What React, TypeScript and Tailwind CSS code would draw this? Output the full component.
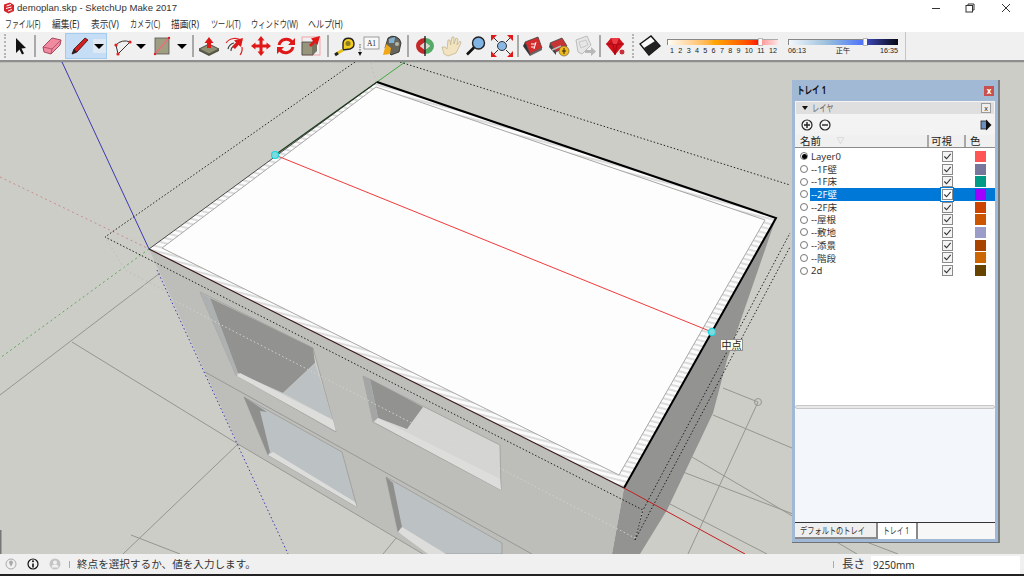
import type { ReactNode } from 'react';

const layers = [
  { name: 'Layer0', color: 'bg-[#ff5555]', active: true },
  { name: '--1F壁', color: 'bg-[#77779b]' },
  { name: '--1F床', color: 'bg-[#009a85]' },
  { name: '--2F壁', color: 'bg-[#a000ff]', selected: true },
  { name: '--2F床', color: 'bg-[#cc4400]' },
  { name: '--屋根', color: 'bg-[#cc5500]' },
  { name: '--敷地', color: 'bg-[#9c9cc8]' },
  { name: '--添景', color: 'bg-[#a84400]' },
  { name: '--階段', color: 'bg-[#cc6600]' },
  { name: '2d', color: 'bg-[#664400]' },
];

const menus = [
  { label: 'ファイル(F)', w: 'w-[47px]', s: 'scale-x-[0.69]' },
  { label: '編集(E)', w: 'w-[39px]', s: 'scale-x-[0.87]' },
  { label: '表示(V)', w: 'w-[39px]', s: 'scale-x-[0.87]' },
  { label: 'カメラ(C)', w: 'w-[41px]', s: 'scale-x-[0.71]' },
  { label: '描画(R)', w: 'w-[40px]', s: 'scale-x-[0.87]' },
  { label: 'ツール(T)', w: 'w-[40px]', s: 'scale-x-[0.71]' },
  { label: 'ウィンドウ(W)', w: 'w-[57px]', s: 'scale-x-[0.72]' },
  { label: 'ヘルプ(H)', w: 'w-[40px]', s: 'scale-x-[0.8]' },
];
const hours = ['1', '2', '3', '4', '5', '6', '7', '8', '9', '10', '11', '12'];

function Tool({ w = 'w-[26px]', children }: { w?: string; children: ReactNode }) {
  return (
    <div className={`flex h-full shrink-0 items-center justify-center ${w}`}>
      <svg viewBox="0 0 24 24" className="h-6 w-6 shrink-0 overflow-visible">
        {children}
      </svg>
    </div>
  );
}

function Sep({ w }: { w: string }) {
  return (
    <div className={`flex h-full shrink-0 items-center justify-center ${w}`}>
      <div className="h-[22px] w-0.5 bg-[#a9a9a9]" />
    </div>
  );
}

function Grip({ w }: { w: string }) {
  return (
    <div className={`flex h-full shrink-0 items-center justify-center ${w}`}>
      <div className="h-[24px] border-l-2 border-dotted border-[#b5b5b5]" />
    </div>
  );
}

function Drop({ w, boxed }: { w: string; boxed?: boolean }) {
  return (
    <div className={`flex h-full shrink-0 items-center justify-center ${w}`}>
      <div className={`flex items-center justify-center ${boxed ? 'h-[14px] w-[13px] bg-[#dfe9f3]' : ''}`}>
        <div className="h-0 w-0 border-x-[5px] border-t-[5px] border-x-transparent border-t-black" />
      </div>
    </div>
  );
}

function Check({ onBlue }: { onBlue?: boolean }) {
  return (
    <div className={`flex h-[11px] w-[11px] items-center justify-center border border-[#8a8a8a] ${onBlue ? 'bg-white' : 'bg-[#f4f4f4]'}`}>
      <svg viewBox="0 0 10 10" className="h-[9px] w-[9px]">
        <path d="M1.5 5 L4 7.5 L8.5 2" fill="none" stroke="#333" strokeWidth="1.2" />
      </svg>
    </div>
  );
}

function Scene() {
  return (
    <svg viewBox="0 62 1024 492" className="block h-[492px] w-[1024px]">
      <defs>
        <pattern id="hatch" width="6" height="5" patternUnits="userSpaceOnUse" patternTransform="rotate(14)">
          <rect width="6" height="5" fill="#fbfbfb" />
          <rect width="6" height="2" fill="#dcdcdc" />
        </pattern>
      </defs>
      <rect x="0" y="62" width="1024" height="492" fill="#cdcdc8" />
      <rect x="0" y="62" width="1024" height="1" fill="#bdbdb9" />

      {/* ground lines */}
      <g stroke="#96968f" strokeWidth="1" fill="none">
        <path d="M160 273 L0 395" />
        <path d="M72 342 L238 444" />
        <path d="M238 444 L123 554" />
        <path d="M131 535 L180 554" />
        <path d="M397 537 L383 554" />
        <path d="M723 388 L758 402 L688 554" />
        <path d="M713 415 L1000 535" />
        <path d="M692 457 L857 554" />
        <path d="M683 472 L898 554" />
        <path d="M668 503 L767 554" />
      </g>
      <circle cx="758" cy="402" r="3.5" fill="none" stroke="#96968f" />

      {/* axes */}
      <path d="M0 177 L149 249" stroke="#c98d8d" strokeWidth="1" strokeDasharray="2 3" />
      <path d="M149 249 L0 358" stroke="#5aaa5a" strokeWidth="1" strokeDasharray="2 3" />
      <path d="M62 62 L149 249" stroke="#3a3ab0" strokeWidth="1" />
      <path d="M377 82 L405 62" stroke="#3fa83f" strokeWidth="1" />
      <path d="M107 240 L125 270 L166 291" stroke="#bdbdb8" strokeWidth="1" strokeDasharray="1.5 3" fill="none" />
      <path d="M371 63 L376 82" stroke="#bdbdb8" strokeWidth="1" strokeDasharray="1.5 3" />

      {/* right wall */}
      <polygon points="776,218 727,360 713,413 667,510 640,554 612,554 624,488" fill="#939392" />
      {/* front wall */}
      <polygon points="149,249 624,488 612,554 423,554 238,444" fill="#bdbdba" />
      <path d="M205 372 L532 554" stroke="#989895" strokeWidth="1" />
      <path d="M238 444 L423 554" stroke="#989895" strokeWidth="1" />

      {/* window upper left */}
      <polygon points="200,292 313,348 336,432 236,375" fill="#cfcfcc" stroke="#9c9c98" strokeWidth="0.8" />
      <polygon points="200,292 210,298 238,373 236,375" fill="#aeb1b2" />
      <polygon points="210,298 313,348 315,363 283,393 238,373" fill="#929290" />
      <polygon points="315,363 333,420 283,393" fill="#bcc1c3" />
      <polygon points="237,376 240,373 333,420 336,431" fill="#dddddb" />

      {/* window upper right */}
      <polygon points="363,376 500,445 501,490 373,422" fill="#d5d5d3" stroke="#9c9c98" strokeWidth="0.8" />
      <polygon points="363,376 370,379 378,418 373,422" fill="#a4a5a5" />
      <polygon points="370,379 423,407 407,429 378,418" fill="#929290" />
      <polygon points="375,422 378,418 500,479 501,490" fill="#dddddb" />

      {/* window lower left */}
      <polygon points="244,397 342,452 357,507 268,455" fill="#bcc1c3" stroke="#9c9c98" strokeWidth="0.8" />
      <polygon points="244,397 267,412 260,411 270,452 268,455" fill="#8f8f8d" />
      <polygon points="268,455 273,452 355,502 357,507" fill="#dddddb" />

      {/* window lower right */}
      <polygon points="386,477 502,543 502,554 443,554 398,532" fill="#bcc1c3" stroke="#9c9c98" strokeWidth="0.8" />
      <polygon points="386,477 393,483 402,527 398,532" fill="#8f8f8d" />
      <polygon points="398,532 402,527 446,554 428,554" fill="#dddddb" />

      {/* white dashed line through the wall */}
      <path d="M140 283 L635 538" stroke="#d2d2cf" strokeWidth="1" strokeDasharray="1.5 2.5" />
      <path d="M635 538 L643 510" stroke="#d2d2cf" strokeWidth="1" strokeDasharray="1.5 2.5" />
      <path d="M157 270 L288 554" stroke="#3a3ab0" strokeWidth="1" strokeDasharray="1.5 2.5" />

      {/* roof */}
      <path d="M149 249 L377 82 L776 218 L624 488 Z M162 248 L619 475 L765 220 L376 87 Z" fill="url(#hatch)" fillRule="evenodd" />
      <polygon points="162,248 376,87 765,220 619,475" fill="#fdfdfd" stroke="#a9a9a7" strokeWidth="1" />
      <path d="M149 249 L377 82" stroke="#4a4a4a" strokeWidth="1" />
      <path d="M275 155 L377 82" stroke="#1e3a1e" strokeWidth="1.2" />
      <path d="M377 82 L776 218 L624 488" fill="none" stroke="#000" strokeWidth="2" />
      <path d="M149 249 L624 488" stroke="#3a1a1a" strokeWidth="1.2" />
      <path d="M624 488 L745 554" stroke="#c42020" strokeWidth="1" />
      <path d="M275 155 L712 332" stroke="#f23a3a" strokeWidth="1" />

      {/* selection box */}
      <g stroke="#222" strokeWidth="1" strokeDasharray="1.5 2" fill="none">
        <path d="M355 62 L105 237 L643 510 L790 233" />
        <path d="M400 62 L790 185" />
        <path d="M635 540 L790 247" />
        <path d="M635 540 L643 510" />
      </g>

      {/* inference points */}
      <circle cx="275" cy="155" r="3.5" fill="#7fd9dd" stroke="#18d8e0" strokeWidth="1.2" />
      <circle cx="712" cy="332" r="3.5" fill="#7fd9dd" stroke="#18d8e0" strokeWidth="1.2" />
      <rect x="0" y="530" width="1.5" height="24" fill="#777" />
    </svg>
  );
}

function TrayPanel() {
  return (
    <div className="absolute left-[792px] top-[18px] flex h-[463px] w-[208px] flex-col border-r-2 border-b border-[#6f7378] border-r-[#7a7d80] bg-[#a1b9d4] px-[3px] pb-[3px]">
      <div className="flex h-[21px] shrink-0 items-center justify-between pl-[2px] pr-[1px]">
        <span className="inline-block origin-left scale-x-[0.72] whitespace-nowrap text-[10.5px] font-bold text-[#111]">トレイ 1</span>
        <div className="flex h-[10px] w-[10px] items-center justify-center bg-[#c75050] text-[8px] font-bold leading-none text-white">x</div>
      </div>
      <div className="flex min-h-0 flex-1 flex-col bg-white">
        <div className="flex h-[14px] shrink-0 items-center justify-between border border-[#f4f4f4] bg-[#dfdfdf] pl-[6px] pr-[3px]">
          <div className="flex items-center gap-[4px]">
            <div className="h-0 w-0 border-x-[3px] border-t-[4px] border-x-transparent border-t-[#111]" />
            <span className="inline-block origin-left scale-x-[0.72] whitespace-nowrap text-[10px] leading-none text-[#666]">レイヤ</span>
          </div>
          <div className="flex h-[10px] w-[10px] items-center justify-center border border-[#9a9a9a] bg-[#eeeeee] text-[7px] leading-none text-[#333]">x</div>
        </div>
        <div className="flex h-[20px] shrink-0 items-center justify-between bg-[#f3f3f3] pl-[6px] pr-[3px]">
          <div className="flex items-center gap-[6px]">
            <svg viewBox="0 0 12 12" className="h-3 w-3">
              <circle cx="6" cy="6" r="5" fill="none" stroke="#222" strokeWidth="1.2" />
              <path d="M3 6 H9 M6 3 V9" stroke="#222" strokeWidth="1.4" />
            </svg>
            <svg viewBox="0 0 12 12" className="h-3 w-3">
              <circle cx="6" cy="6" r="5" fill="none" stroke="#222" strokeWidth="1.2" />
              <path d="M3 6 H9" stroke="#222" strokeWidth="1.4" />
            </svg>
          </div>
          <svg viewBox="0 0 12 12" className="h-3 w-3">
            <rect x="1" y="2" width="6" height="8" fill="#6b8fc0" stroke="#222" strokeWidth="0.8" />
            <path d="M6 0.5 L11.5 6 L6 11.5 Z" fill="#111" />
          </svg>
        </div>
        <div className="grid h-[13px] shrink-0 grid-cols-[134px_37px_1fr] border-b border-[#8c8c8c] bg-[#f0f0f0] text-[10.5px] leading-[12px] text-[#222]">
          <div className="flex items-center gap-[16px] border-r-2 border-[#a8a8a8] pl-[5px]">
            <span>名前</span>
            <span className="text-[7px] text-[#aaa]">▽</span>
          </div>
          <div className="border-r-2 border-[#a8a8a8] pl-[2px]">可視</div>
          <div className="pl-[4px]">色</div>
        </div>
        <div className="flex h-[257px] shrink-0 flex-col pt-[2px]">
          {layers.map((l) => (
            <div key={l.name} className="flex h-[12.7px] shrink-0 items-center">
              <div className="flex w-[15px] shrink-0 justify-end pr-[2px]">
                <div className="flex h-[8px] w-[8px] items-center justify-center rounded-full border border-[#777] bg-white">
                  {l.active && <div className="h-[5px] w-[5px] rounded-full bg-black" />}
                </div>
              </div>
              <div className={`h-full w-[131px] shrink-0 pl-[1px] text-[9.5px] leading-[13px] ${l.selected ? 'bg-[#0078d7] text-white' : 'text-[#333]'}`}>{l.name}</div>
              <div className={`flex h-full w-[12px] shrink-0 items-center justify-center ${l.selected ? 'bg-white outline outline-[#0078d7]' : ''}`}>
                <Check onBlue={l.selected} />
              </div>
              <div className={`flex h-full flex-1 items-center pl-[22px] ${l.selected ? 'bg-[#0078d7]' : ''}`}>
                <div className={`h-[11px] w-[11px] ${l.color}`} />
              </div>
            </div>
          ))}
        </div>
        <div className="h-[4px] shrink-0 rounded-sm border border-[#c8c8c8] bg-[#e8e8e8]" />
        <div className="min-h-0 flex-1 bg-[#f3f6fb]" />
        <div className="flex h-[17px] shrink-0 border-t border-[#333] bg-[#f7f7f7] text-[9.5px] leading-[15px] text-[#333]">
          <div className="w-[83px] overflow-hidden border-r-2 border-b-2 border-[#8a8a8a] bg-[#efefef] pl-[5px]">
            <span className="inline-block origin-left scale-x-[0.76] whitespace-nowrap">デフォルトのトレイ</span>
          </div>
          <div className="w-[40px] overflow-hidden border-r-2 border-[#8a8a8a] bg-white pl-[5px]">
            <span className="inline-block origin-left scale-x-[0.72] whitespace-nowrap">トレイ 1</span>
          </div>
        </div>
      </div>
    </div>
  );
}

export default function App() {
  return (
    <div className="flex h-[576px] w-[1024px] flex-col overflow-hidden bg-white font-['Noto_Sans','Noto_Sans_CJK_JP',sans-serif] text-[#333]">
      {/* title bar */}
      <div className="flex h-[16px] shrink-0 items-center bg-white pl-[3px]">
        <svg viewBox="0 0 12 12" className="h-3 w-3 shrink-0">
          <path d="M1 2.5 L7 0.5 L11 3 L11 9 L5.5 11.5 L1 9 Z" fill="#d8262c" />
          <path d="M3.5 4 L8 2.5 M3 6.5 L8.5 5 M5 9 L9 7.5" stroke="#fff" strokeWidth="1" />
        </svg>
        <span className="ml-[2px] font-['Liberation_Sans',sans-serif] text-[9.6px] leading-none">demoplan.skp - SketchUp Make 2017</span>
        <div className="ml-auto flex h-full items-center">
          <div className="flex w-[34px] justify-center">
            <svg viewBox="0 0 10 10" className="h-[10px] w-[10px]"><path d="M1 5.5 H9" stroke="#333" /></svg>
          </div>
          <div className="flex w-[34px] justify-center">
            <svg viewBox="0 0 10 10" className="h-[10px] w-[10px]">
              <path d="M3 2.5 V1 H9 V7 H7.5" fill="none" stroke="#333" />
              <rect x="1" y="2.5" width="6.5" height="6.5" fill="none" stroke="#333" />
            </svg>
          </div>
          <div className="flex w-[37px] justify-center">
            <svg viewBox="0 0 10 10" className="h-[10px] w-[10px]"><path d="M1 1 L9 9 M9 1 L1 9" stroke="#333" /></svg>
          </div>
        </div>
      </div>

      {/* menu bar */}
      <div className="flex h-[16px] shrink-0 items-center bg-white pl-[5px] text-[10px] leading-none">
        {menus.map((m) => (
          <div key={m.label} className={m.w}>
            <span className={`inline-block origin-left whitespace-nowrap ${m.s}`}>{m.label}</span>
          </div>
        ))}
      </div>

      {/* toolbar */}
      <div className="flex h-[28px] shrink-0 items-center bg-[#f0f0f0]">
        <Grip w="w-[10px]" />
        <Tool w="w-[20px]">
          <path d="M8 4 L8 19 L11.5 15.5 L14 20.5 L16 19.5 L13.5 14.5 L18 14 Z" fill="#111" />
        </Tool>
        <Sep w="w-[9px]" />
        <Tool>
          <path d="M3 13 L12 4 L21 6 L20 11 L11 20 L4 18 Z" fill="#f08aa0" stroke="#a8485c" strokeWidth="1" />
          <path d="M3 13 L12 15 L21 6 M12 15 L11 20" fill="none" stroke="#a8485c" strokeWidth="0.8" />
        </Tool>
        <div className="flex h-[26px] w-[42px] shrink-0 items-center border border-[#a3cbee] bg-[#c5def5]">
          <Tool w="w-[26px]">
            <path d="M5 20 L7 15 L18 4 L21 6 L10 18 Z" fill="#d02020" stroke="#3a1010" strokeWidth="0.8" />
            <path d="M5 20 L7 15 L10 18 Z" fill="#222" />
          </Tool>
          <Drop w="w-[14px]" boxed />
        </div>
        <div className="w-[3px] shrink-0" />
        <Tool>
          <path d="M5 11 A12 12 0 0 1 19 8" fill="none" stroke="#333" strokeWidth="1" />
          <path d="M5 11 L7 20 L19 8" fill="none" stroke="#333" strokeWidth="1" />
          <circle cx="5" cy="11" r="1.6" fill="#e02020" />
          <circle cx="19" cy="8" r="1.6" fill="#e02020" />
          <circle cx="7" cy="20" r="1.6" fill="#e02020" />
        </Tool>
        <Drop w="w-[10px]" />
        <div className="w-[3px] shrink-0" />
        <Tool>
          <rect x="5" y="4" width="14" height="16" fill="#a09e82" stroke="#555" strokeWidth="0.8" />
          <path d="M5 20 L19 4" stroke="#f06a78" strokeWidth="1.2" />
          <circle cx="5" cy="20" r="1.2" fill="#e02020" />
          <circle cx="19" cy="4" r="1.2" fill="#e02020" />
        </Tool>
        <Drop w="w-[14px]" />
        <Sep w="w-[7px]" />
        <Tool>
          <path d="M2 15 L12 10 L22 15 L12 20 Z" fill="#8f8f72" stroke="#333" strokeWidth="0.8" />
          <path d="M2 15 V17 L12 22 L22 17 V15 L12 20 Z" fill="#555544" />
          <path d="M12 3 L16.5 9 H14 V14 H10 V9 H7.5 Z" fill="#e01818" />
        </Tool>
        <Tool>
          <path d="M3 9 A11 11 0 0 1 19 7 M19 13 A10 10 0 0 1 17 21" fill="none" stroke="#e02020" strokeWidth="1.2" />
          <path d="M5 15 A8 8 0 0 1 11 9 M8 17 A5 5 0 0 1 12 12" fill="none" stroke="#444" strokeWidth="1.2" />
          <path d="M20 4 L18 13 L15.5 11 L12 15 L9 12.5 L13 8.5 L11 6.5 Z" fill="#dd1818" />
        </Tool>
        <Tool w="w-[25px]">
          <path d="M12 2 L15.5 6.5 H13.5 V10.5 H17.5 V8.5 L22 12 L17.5 15.5 V13.5 H13.5 V17.5 H15.5 L12 22 L8.5 17.5 H10.5 V13.5 H6.5 V15.5 L2 12 L6.5 8.5 V10.5 H10.5 V6.5 H8.5 Z" fill="#e01818" />
        </Tool>
        <Tool w="w-[25px]">
          <path d="M5 11 A7.5 7.5 0 0 1 18 8" fill="none" stroke="#e01818" strokeWidth="3" />
          <path d="M19 13 A7.5 7.5 0 0 1 6 16" fill="none" stroke="#e01818" strokeWidth="3" />
          <path d="M21 4 V11 H14 Z M3 20 V13 H10 Z" fill="#e01818" />
        </Tool>
        <Tool>
          <rect x="3" y="3" width="18" height="18" fill="none" stroke="#f2a4ac" strokeWidth="1" />
          <path d="M3 8 H14 V21 H3 Z" fill="#97957c" stroke="#444" strokeWidth="0.8" />
          <path d="M14 8 L18 5 V17 L14 21 Z" fill="#77755f" />
          <path d="M21 2 L18.5 11 L16 9 L12 13 L10 11 L14 7 L12 4.5 Z" fill="#e01818" />
        </Tool>
        <Sep w="w-[8px]" />
        <Tool>
          <path d="M10 9 A5.5 5.5 0 1 1 17 15 L10 16 Z" fill="#f2cc20" stroke="#222" strokeWidth="1.4" />
          <circle cx="15" cy="9.5" r="2.5" fill="#8a7a20" />
          <path d="M3 20 L10 16" stroke="#e0c020" strokeWidth="3" />
          <path d="M2 21 L5 19" stroke="#222" strokeWidth="3" />
        </Tool>
        <Tool w="w-[22px]">
          <rect x="7" y="3" width="15" height="12" fill="#f8f8f8" stroke="#888" strokeWidth="0.8" />
          <text x="14.5" y="12" textAnchor="middle" fontSize="7.5" fontFamily="'Liberation Serif',serif" fill="#222">A1</text>
          <path d="M3 10 V19" stroke="#555" strokeWidth="1" strokeDasharray="1.5 1" />
          <path d="M1 18 H5 L3 22 Z" fill="#111" />
        </Tool>
        <Tool w="w-[24px]">
          <path d="M8 4 A8 8 0 0 1 21 9 L19 18 L11 21 L5 14 Z" fill="#66665c" stroke="#222" strokeWidth="0.8" />
          <path d="M9 5 L15 3 L14 9 L9 9 Z" fill="#7fb2d8" />
          <path d="M6 10 L11 14 L10 20 L3 21 Z" fill="#f0a818" />
          <circle cx="17" cy="10" r="2" fill="#b8b8a8" />
        </Tool>
        <Sep w="w-[8px]" />
        <Tool>
          <path d="M3 12 A9 8 0 0 1 12 4 V8 L7 12 L12 16 V20 A9 8 0 0 1 3 12 Z" fill="#c42828" />
          <path d="M21 12 A9 8 0 0 0 12 4 V8 L17 12 L12 16 V20 A9 8 0 0 0 21 12 Z" fill="#55aa66" />
          <path d="M7 12 L12 8 L17 12 L12 16 Z" fill="#d8d8d0" />
          <path d="M12 2 V22" stroke="#222" strokeWidth="1.4" />
        </Tool>
        <Tool w="w-[25px]">
          <path d="M5 20 L3 13 L6 13 L8 15 L9 6 L11 6 L11.5 11 L13 3 L15 3 L15 10 L17 4 L19 5 L18 11 L21 7 L22 9 L17 19 L9 22 Z" fill="#f2e4c0" stroke="#c4b690" strokeWidth="0.8" />
        </Tool>
        <Tool>
          <circle cx="14.5" cy="9" r="6" fill="#7fb4e4" stroke="#222" strokeWidth="1.4" />
          <path d="M10 13.5 L3 20.5" stroke="#111" strokeWidth="2.6" />
        </Tool>
        <Tool>
          <circle cx="12" cy="12" r="4.5" fill="#8ab8e6" stroke="#333" strokeWidth="1" />
          <path d="M2 2 L8 8 M22 2 L16 8 M2 22 L8 16 M22 22 L16 16" stroke="#333" strokeWidth="1" />
          <path d="M1 1 H7 L1 7 Z M23 1 H17 L23 7 Z M1 23 H7 L1 17 Z M23 23 H17 L23 17 Z" fill="#e01818" />
        </Tool>
        <Sep w="w-[5px]" />
        <Tool>
          <path d="M4 8 L17 3 L21 14 L9 20 Z" fill="#d22c2c" stroke="#444" strokeWidth="0.8" />
          <path d="M4 8 L2 12 L9 22 L9 20 Z" fill="#333" />
          <path d="M9 20 L21 14 L21 16 L9 22 Z" fill="#666" />
          <path d="M10 10 H15 M10 13 H13 M15 8 L13 15" stroke="#fff" strokeWidth="1" />
        </Tool>
        <Tool>
          <path d="M3 9 L15 4 L20 12 L9 18 Z" fill="#c83434" stroke="#444" strokeWidth="0.8" />
          <path d="M3 9 L2 13 L9 21 L9 18 Z" fill="#444" />
          <path d="M5 16 L14 12" stroke="#bbb" strokeWidth="1.6" />
          <circle cx="17" cy="17" r="5" fill="#f0b818" stroke="#554" strokeWidth="0.6" />
          <path d="M17 14 V20 M15 17 H19" stroke="#222" strokeWidth="1" />
        </Tool>
        <Tool w="w-[25px]">
          <path d="M3 6 L14 2 L18 11 L9 20 L5 18 Z" fill="#e6e6e6" stroke="#bbb" strokeWidth="1" />
          <path d="M6 8 L13 6 L15 11 L8 14 Z" fill="none" stroke="#c8c8c8" strokeWidth="1" />
          <path d="M12 16 H18 V13 L23 17.5 L18 22 V19 H12 Z" fill="#b8b8b8" />
        </Tool>
        <Sep w="w-[5px]" />
        <Tool>
          <path d="M3 10 L8 4 H16 L21 10 L12 21 Z" fill="#d4101c" />
          <path d="M3 10 H21 M8 4 L10 10 L12 21 L14 10 L16 4" fill="none" stroke="#8c0a12" strokeWidth="0.7" />
          <path d="M8 4 H16 L14 10 H10 Z" fill="#ee3a44" />
          <circle cx="19" cy="18" r="3" fill="#c8303a" stroke="#eee" strokeWidth="1" />
        </Tool>
        <Grip w="w-[10px]" />
        <Tool w="w-[24px]">
          <path d="M2 10 L13 2 L22 12 L11 21 Z" fill="#fafafa" stroke="#111" strokeWidth="1.4" />
          <path d="M6 14 L17 7 L22 12 L11 21 Z" fill="#222" />
        </Tool>

        {/* shadow settings */}
        <div className="flex h-full w-[243px] shrink-0 items-center pl-[5px]">
          <div className="flex w-[111px] shrink-0 flex-col pt-[2px]">
            <div className="flex h-[6px] items-stretch">
              <div className="w-[92px] border-t border-l border-[#888] bg-gradient-to-r from-[#fffdf4] via-[#ffa800] to-[#ff0000]" />
              <div className="w-[3px] bg-[#f8f8f8] outline outline-[#bbb]" />
              <div className="flex-1 border-t border-[#aaa] bg-gradient-to-r from-[#ff9a9a] to-[#ffe4e4]" />
            </div>
            <div className="mt-[1px] flex justify-between pl-[3px] pr-[1px] font-['Liberation_Sans',sans-serif] text-[7.2px] leading-[9px] text-[#222]">
              {hours.map((h) => (
                <span key={h}>{h}</span>
              ))}
            </div>
          </div>
          <div className="ml-[10px] flex w-[110px] shrink-0 flex-col pt-[2px]">
            <div className="flex h-[6px] items-stretch">
              <div className="w-[76px] border-t border-l border-[#888] bg-gradient-to-r from-[#f4f8fc] via-[#9cc0dc] to-[#4f6ff8]" />
              <div className="w-[3px] bg-[#f8f8f8] outline outline-[#bbb]" />
              <div className="flex-1 bg-gradient-to-r from-[#3c48b8] to-[#080818]" />
            </div>
            <div className="mt-[1px] flex justify-between font-['Liberation_Sans','Noto_Sans_CJK_JP',sans-serif] text-[7.2px] leading-[9px] text-[#222]">
              <span>06:13</span>
              <span>正午</span>
              <span>16:35</span>
            </div>
          </div>
        </div>
        <div className="h-full w-[1px] shrink-0 bg-[#c4c4c4]" />
      </div>
      <div className="h-[2px] shrink-0 bg-[#8e8e8e]" />

      {/* viewport */}
      <div className="relative h-[492px] shrink-0">
        <Scene />
        <div className="absolute left-[720px] top-[277px] flex h-[12px] w-[23px] items-center justify-center border border-[#8f8f8f] bg-[#fdfde8] text-[10px] leading-none text-[#222]">
          中点
        </div>
        <TrayPanel />
      </div>

      {/* status bar */}
      <div className="flex h-[20px] shrink-0 items-center bg-[#f0f0f0]">
        <div className="flex w-[21px] justify-center">
          <svg viewBox="0 0 12 12" className="h-3 w-3">
            <circle cx="6" cy="6" r="5" fill="none" stroke="#aaa" />
            <path d="M4 4.5 A2 2 0 0 1 8 4.5 L6.5 8 H5.5 Z" fill="#aaa" />
          </svg>
        </div>
        <div className="flex w-[23px] justify-center">
          <svg viewBox="0 0 12 12" className="h-3 w-3">
            <circle cx="6" cy="6" r="5" fill="none" stroke="#111" strokeWidth="1.2" />
            <path d="M6 5.5 V9.5" stroke="#111" strokeWidth="1.6" />
            <circle cx="6" cy="3.2" r="1" fill="#111" />
          </svg>
        </div>
        <div className="flex w-[21px] justify-center">
          <svg viewBox="0 0 12 12" className="h-3 w-3">
            <circle cx="6" cy="6" r="5.5" fill="#c4c4c4" />
            <circle cx="6" cy="4.5" r="2" fill="#f0f0f0" />
            <path d="M2.5 9.5 A3.5 3 0 0 1 9.5 9.5" fill="#f0f0f0" />
          </svg>
        </div>
        <div className="ml-[4px] h-[7px] w-px bg-[#aaa]" />
        <span className="ml-[7px] text-[10.6px] leading-none text-[#333]">終点を選択するか、値を入力します。</span>
        <div className="ml-auto h-[7px] w-px bg-[#aaa]" />
        <span className="ml-[8px] text-[11.5px] leading-none text-[#333]">長さ</span>
        <div className="ml-[6px] mr-[4px] flex h-[18px] w-[149px] items-center self-end bg-white pl-[2px] text-[10px] text-[#333]">9250mm</div>
      </div>
      <div className="h-[2px] shrink-0 bg-[#222]" />
    </div>
  );
}
